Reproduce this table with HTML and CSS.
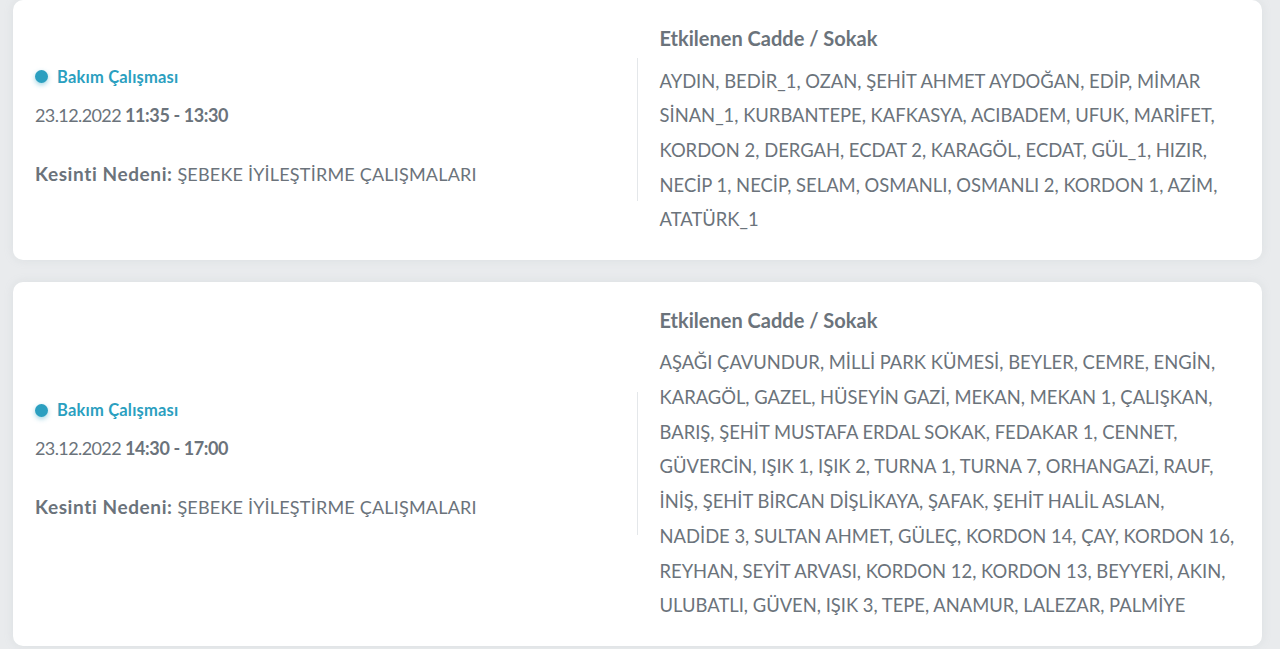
FILE: index.html
```html
<!DOCTYPE html>
<html lang="tr">
<head>
<meta charset="utf-8">
<title>Kesintiler</title>
<link rel="stylesheet" href="styles.css">
</head>
<body>
<main class="list">
  <article class="card">
    <div class="info">
      <div class="type"><span class="dot"></span>Bakım Çalışması</div>
      <p class="date">23.12.2022 <b>11:35 - 13:30</b></p>
      <p class="reason"><b>Kesinti Nedeni:</b> ŞEBEKE İYİLEŞTİRME ÇALIŞMALARI</p>
    </div>
    <div class="streets">
      <span class="divider"></span>
      <div class="streets-body">
        <h3 class="streets-title">Etkilenen Cadde / Sokak</h3>
        <p class="streets-list">AYDIN, BEDİR_1, OZAN, ŞEHİT AHMET AYDOĞAN, EDİP, MİMAR SİNAN_1, KURBANTEPE, KAFKASYA, ACIBADEM, UFUK, MARİFET, KORDON 2, DERGAH, ECDAT 2, KARAGÖL, ECDAT, GÜL_1, HIZIR, NECİP 1, NECİP, SELAM, OSMANLI, OSMANLI 2, KORDON 1, AZİM, ATATÜRK_1</p>
      </div>
    </div>
  </article>
  <article class="card">
    <div class="info">
      <div class="type"><span class="dot"></span>Bakım Çalışması</div>
      <p class="date">23.12.2022 <b>14:30 - 17:00</b></p>
      <p class="reason"><b>Kesinti Nedeni:</b> ŞEBEKE İYİLEŞTİRME ÇALIŞMALARI</p>
    </div>
    <div class="streets">
      <span class="divider"></span>
      <div class="streets-body">
        <h3 class="streets-title">Etkilenen Cadde / Sokak</h3>
        <p class="streets-list">AŞAĞI ÇAVUNDUR, MİLLİ PARK KÜMESİ, BEYLER, CEMRE, ENGİN, KARAGÖL, GAZEL, HÜSEYİN GAZİ, MEKAN, MEKAN 1, ÇALIŞKAN, BARIŞ, ŞEHİT MUSTAFA ERDAL SOKAK, FEDAKAR 1, CENNET, GÜVERCİN, IŞIK 1, IŞIK 2, TURNA 1, TURNA 7, ORHANGAZİ, RAUF, İNİŞ, ŞEHİT BİRCAN DİŞLİKAYA, ŞAFAK, ŞEHİT HALİL ASLAN, NADİDE 3, SULTAN AHMET, GÜLEÇ, KORDON 14, ÇAY, KORDON 16, REYHAN, SEYİT ARVASI, KORDON 12, KORDON 13, BEYYERİ, AKIN, ULUBATLI, GÜVEN, IŞIK 3, TEPE, ANAMUR, LALEZAR, PALMİYE</p>
      </div>
    </div>
  </article>
</main>
</body>
</html>
```

FILE: styles.css
```css
* { box-sizing: border-box; }

html, body {
  margin: 0;
  padding: 0;
  background: #e9ebed;
  font-family: Lato, "Open Sans", sans-serif;
  color: #6b737b;
}

.list {
  padding: 0 18px 0 13px;
}

.card {
  display: flex;
  background: #ffffff;
  border-radius: 10px;
  box-shadow: 0 0 10px rgba(160, 170, 180, 0.18);
  padding: 22px 22px 22.6px 22px;
  margin-bottom: 22px;
}

.info {
  flex: 1 1 0;
  display: flex;
  flex-direction: column;
  justify-content: center;
  padding-bottom: 7px;
}

.type {
  display: flex;
  align-items: center;
  gap: 9px;
  font-size: 16.5px;
  font-weight: 700;
  line-height: 24px;
  letter-spacing: 0.2px;
  color: #2b9fc0;
}

.dot {
  flex: 0 0 13px;
  width: 13px;
  height: 13px;
  border-radius: 50%;
  background: #2b9fc0;
  box-shadow: 0 2px 5px rgba(43, 159, 192, 0.45);
}

.date {
  margin: 13px 0 0;
  font-size: 18px;
  line-height: 27px;
  letter-spacing: -0.6px;
}

.date b {
  font-weight: 700;
  letter-spacing: -0.4px;
}

.reason {
  margin: 31px 0 0;
  font-size: 18px;
  line-height: 27px;
  letter-spacing: 0.2px;
}

.reason b {
  font-size: 19px;
  font-weight: 700;
  letter-spacing: 0.6px;
}

.streets {
  flex: 1 1 0;
  display: flex;
  align-items: center;
}

.divider {
  flex: 0 0 1px;
  align-self: center;
  height: 143px;
  margin-left: -1px;
  background: #e4e7ea;
}

.streets-body {
  padding-left: 22px;
  padding-right: 3px;
  align-self: stretch;
}

.streets-title {
  margin: 0 0 9.6px;
  font-size: 20px;
  line-height: 32px;
  font-weight: 700;
}

.streets-list {
  margin: 0;
  font-size: 18.4px;
  line-height: 34.7px;
}
```
